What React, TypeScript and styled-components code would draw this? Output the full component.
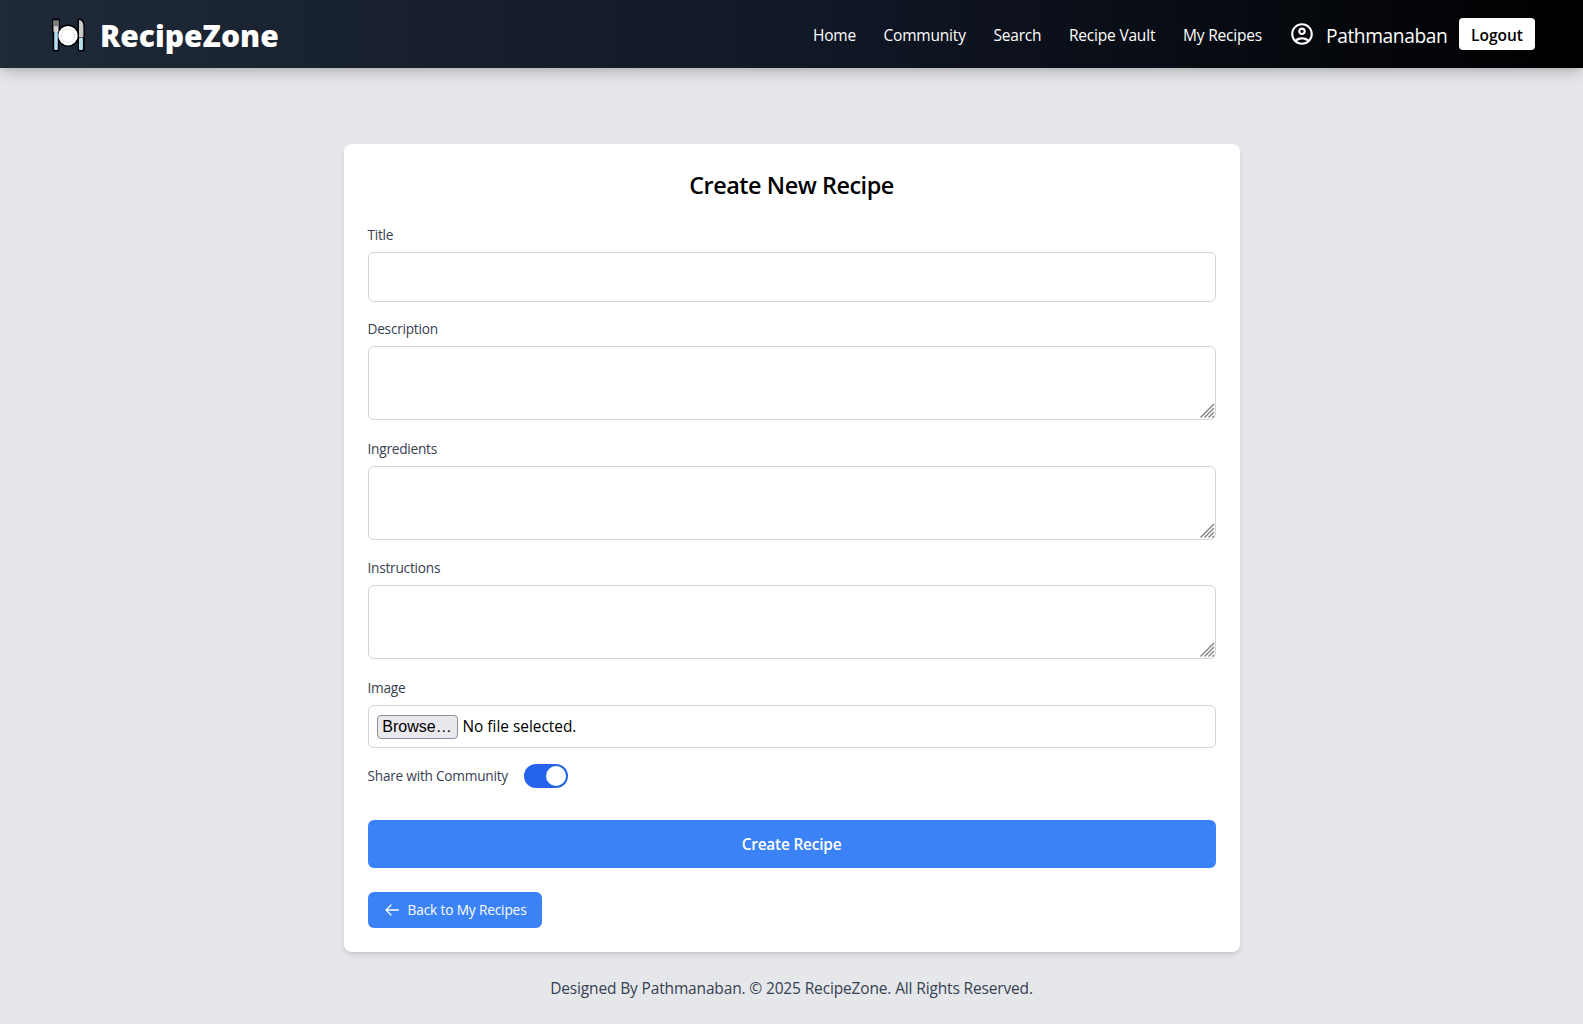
import React from 'react';
import styled, { createGlobalStyle } from 'styled-components';

const Global = createGlobalStyle`
  *, *::before, *::after { box-sizing: border-box; }
  body { margin: 0; background: #e5e7eb; font-family: "Segoe UI", "Open Sans", "Noto Sans", sans-serif; color: #000; overflow: hidden; }
  button, input, textarea { font-family: inherit; }
`;

const Page = styled.div`
  min-height: 1024px;
  display: flex;
  flex-direction: column;
  align-items: center;
`;
const Navbar = styled.header`
  width: 100%;
  height: 68px;
  padding: 0 48px;
  display: flex;
  align-items: center;
  justify-content: space-between;
  color: #fff;
  background: linear-gradient(to right, #1f2937, #111827, #000);
  box-shadow: 0 10px 15px -3px rgba(0, 0, 0, 0.1), 0 4px 6px -4px rgba(0, 0, 0, 0.1), 0 2px 12px rgba(0, 0, 0, 0.12);
`;
const Brand = styled.div`
  display: flex;
  align-items: center;
  gap: 12px;
`;
const BrandName = styled.span`
  padding-top: 3px;
  font-size: 30px;
  font-weight: 800;
  line-height: 36px;
`;
const Menu = styled.nav`
  display: flex;
  align-items: center;
`;
const Links = styled.div`
  display: flex;
  gap: 28px;
  margin-right: 26px;
  padding-top: 1px;
`;
const NavLink = styled.a<{ $w: number }>`
  width: ${(p) => p.$w}px;
  white-space: nowrap;
  font-size: 15.5px;
  line-height: 24px;
  letter-spacing: -0.2px;
`;
const User = styled.div`
  display: flex;
  align-items: center;
  gap: 11px;
  margin-right: 12px;
`;
const UserName = styled.span`
  width: 121px;
  padding-top: 3px;
  white-space: nowrap;
  font-size: 19.2px;
  line-height: 28px;
  letter-spacing: -0.4px;
`;
const Logout = styled.button`
  width: 76px;
  height: 32px;
  padding: 2px 0 0;
  border: 0;
  border-radius: 4px;
  background: #fff;
  color: #000;
  font-size: 15.5px;
  font-weight: 600;
`;
const Card = styled.main`
  width: 896px;
  height: 808px;
  margin-top: 76px;
  padding: 24px;
  display: flex;
  flex-direction: column;
  border-radius: 8px;
  background: #fff;
  box-shadow: 0 4px 6px -1px rgba(0, 0, 0, 0.1), 0 2px 4px -2px rgba(0, 0, 0, 0.1);
`;
const Heading = styled.h2`
  margin: 0 0 23px;
  padding-top: 1px;
  text-align: center;
  font-size: 23.4px;
  font-weight: 600;
  line-height: 32px;
  letter-spacing: -0.45px;
`;
const Field = styled.div<{ $after?: number }>`
  display: flex;
  flex-direction: column;
  gap: 7px;
  margin-bottom: ${(p) => p.$after ?? 17.6}px;
`;
const Label = styled.label`
  padding-top: 1px;
  font-size: 13.7px;
  line-height: 20px;
  letter-spacing: -0.25px;
  color: #374151;
`;
const Input = styled.input`
  height: 50px;
  padding: 12px;
  border: 1px solid #d1d5db;
  border-radius: 6px;
  outline: 0;
`;
const AreaBox = styled.div`
  display: flex;
  position: relative;
  height: 74px;
`;
const Area = styled.textarea`
  flex: 1;
  padding: 12px;
  border: 1px solid #d1d5db;
  border-radius: 6px;
  outline: 0;
  resize: none;
`;
const Grip = styled.svg`
  position: absolute;
  right: 1px;
  bottom: 2px;
`;
const FileRow = styled.div`
  height: 43px;
  padding: 1px 8px 0;
  display: flex;
  align-items: center;
  gap: 5px;
  border: 1px solid #d1d5db;
  border-radius: 6px;
  font-size: 15.4px;
`;
const Browse = styled.button`
  width: 81px;
  height: 24px;
  padding: 0;
  border: 1px solid #8f8f9d;
  border-radius: 4px;
  background: #e9e9ed;
  color: #000;
  && { font-family: "Liberation Sans", Arial, sans-serif; }
  font-size: 16px;
  line-height: 20px;
`;
const Share = styled.div`
  display: flex;
  align-items: center;
  gap: 16px;
  height: 24px;
  margin-bottom: 32px;
`;
const ShareLabel = styled(Label)`
  width: 140px;
  white-space: nowrap;
`;
const Toggle = styled.div`
  width: 44px;
  height: 24px;
  padding: 2px;
  display: flex;
  justify-content: flex-end;
  border-radius: 12px;
  background: #2563eb;
`;
const Knob = styled.span`
  width: 20px;
  height: 20px;
  border-radius: 50%;
  background: #fff;
`;
const Submit = styled.button`
  height: 48px;
  padding: 2px 0 0;
  flex-shrink: 0;
  border: 0;
  border-radius: 6px;
  background: #3b82f6;
  color: #fff;
  font-size: 15.4px;
  font-weight: 600;
  letter-spacing: -0.2px;
`;
const Back = styled.a`
  width: 174px;
  height: 36px;
  margin-top: 24px;
  padding-left: 16px;
  display: flex;
  align-items: center;
  gap: 8px;
  border-radius: 6px;
  background: #3b82f6;
  color: #fff;
  font-size: 13.7px;
  letter-spacing: -0.16px;
  white-space: nowrap;
`;
const Footer = styled.footer`
  margin-top: 24px;
  color: #374151;
  font-size: 15.5px;
  line-height: 24px;
  letter-spacing: -0.15px;
`;

const PlateLogo = () => (
  <svg width="40" height="40" viewBox="0.5 0 40 40">
    <g stroke="#000" strokeWidth="2.800" strokeLinejoin="round" fill="#000">
      <path d="M6 6.200h5v11l-.6 2V36H6.600V19.200L6 17.200z" />
      <path d="M31.500 6c3 0 4.400 3 4.400 7v23h-4.400z" />
      <circle cx="20.500" cy="21.700" r="9.700" />
    </g>
    <path d="M6 6.200h1.100v6h.8v-6h1.200v6h.8v-6H11v11l-.6 1H6.600l-.6-1z" fill="#d3d3d3" />
    <rect x="6.700" y="18" width="3.600" height="18" rx="1" fill="#b4dcf0" />
    <path d="M31.500 6c3 0 4.400 3 4.400 7v10h-4.400z" fill="#c8c8c8" />
    <rect x="31.500" y="23.500" width="3.900" height="12.500" rx="1" fill="#b4dcf0" />
    <circle cx="20.500" cy="21.700" r="9.700" fill="#fff" />
    <circle cx="20.500" cy="21.700" r="6.600" fill="none" stroke="#e2e2e2" />
  </svg>
);

const UserIcon = () => (
  <svg width="26" height="26" viewBox="0 0 24 24" fill="#fff">
    <path d="M12 2C6.480 2 2 6.480 2 12s4.480 10 10 10 10-4.480 10-10S17.520 2 12 2zM7.350 18.500C8.660 17.560 10.260 17 12 17s3.340.56 4.650 1.500C15.340 19.440 13.740 20 12 20s-3.340-.56-4.650-1.500zm10.790-1.380C16.450 15.800 14.320 15 12 15s-4.450.8-6.140 2.120C4.700 15.730 4 13.950 4 12c0-4.420 3.580-8 8-8s8 3.580 8 8c0 1.950-.7 3.730-1.860 5.120zM12 6c-1.930 0-3.500 1.570-3.500 3.500S10.070 13 12 13s3.500-1.570 3.500-3.500S13.930 6 12 6zm0 5c-.83 0-1.500-.67-1.500-1.500S11.170 8 12 8s1.500.67 1.500 1.500S12.830 11 12 11z" />
  </svg>
);

const TextField = ({ name }: { name: string }) => (
  <Field>
    <Label>{name}</Label>
    <AreaBox>
      <Area aria-label={name} />
      <Grip width="15" height="15" viewBox="0 0 15 15" stroke="#808080" strokeWidth="1.400">
        <path d="M.5 14.500L14 1M4.500 14.500L14 5M8.500 14.500L14 9M12.500 14.500L14 13" />
      </Grip>
    </AreaBox>
  </Field>
);

const links: [string, number][] = [['Home', 42.5], ['Community', 82], ['Search', 47.5], ['Recipe Vault', 86], ['My Recipes', 80]];

export default function App() {
  return (
    <Page>
      <Global />
      <Navbar>
        <Brand>
          <PlateLogo />
          <BrandName>RecipeZone</BrandName>
        </Brand>
        <Menu>
          <Links>{links.map(([t, w]) => <NavLink key={t} $w={w}>{t}</NavLink>)}</Links>
          <User><UserIcon /><UserName>Pathmanaban</UserName></User>
          <Logout>Logout</Logout>
        </Menu>
      </Navbar>
      <Card>
        <Heading>Create New Recipe</Heading>
        <Field $after={16}>
          <Label>Title</Label>
          <Input aria-label="Title" />
        </Field>
        <TextField name="Description" />
        <TextField name="Ingredients" />
        <TextField name="Instructions" />
        <Field $after={16}>
          <Label>Image</Label>
          <FileRow><Browse>Browse…</Browse><span>No file selected.</span></FileRow>
        </Field>
        <Share>
          <ShareLabel>Share with Community</ShareLabel>
          <Toggle><Knob /></Toggle>
        </Share>
        <Submit>Create Recipe</Submit>
        <Back>
          <svg width="16" height="16" viewBox="0 0 16 16" fill="none" stroke="#fff" strokeWidth="1.300" strokeLinecap="round" strokeLinejoin="round">
            <path d="M14.500 8H2M7 3L2 8l5 5" />
          </svg>
          Back to My Recipes
        </Back>
      </Card>
      <Footer>Designed By Pathmanaban. © 2025 RecipeZone. All Rights Reserved.</Footer>
    </Page>
  );
}
